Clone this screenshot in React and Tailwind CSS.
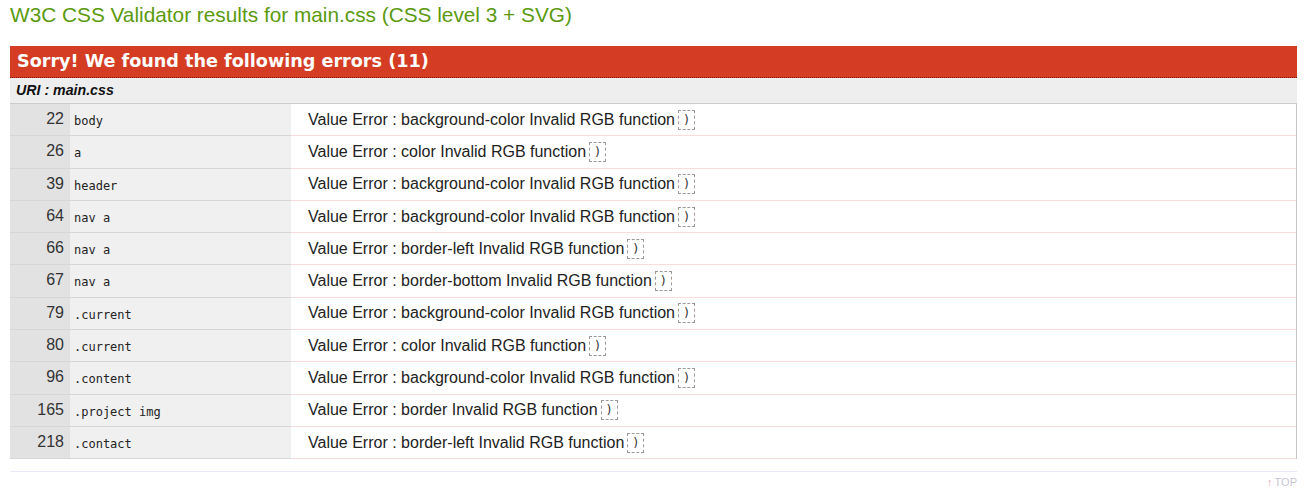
const errors = [
  { line: 22, ctx: 'body', prop: 'background-color' },
  { line: 26, ctx: 'a', prop: 'color' },
  { line: 39, ctx: 'header', prop: 'background-color' },
  { line: 64, ctx: 'nav a', prop: 'background-color' },
  { line: 66, ctx: 'nav a', prop: 'border-left' },
  { line: 67, ctx: 'nav a', prop: 'border-bottom' },
  { line: 79, ctx: '.current', prop: 'background-color' },
  { line: 80, ctx: '.current', prop: 'color' },
  { line: 96, ctx: '.content', prop: 'background-color' },
  { line: 165, ctx: '.project img', prop: 'border' },
  { line: 218, ctx: '.contact', prop: 'border-left' },
];

export default function App() {
  return (
    <div className="w-[1312px] h-[492px] bg-white px-[10px] overflow-hidden font-['Liberation_Sans',Arial,sans-serif]">
      <h2 className="h-[31px] pt-[2px] text-[20.8px] leading-[26px] text-[#5b9a0f]">
        W3C CSS Validator results for main.css (CSS level 3 + SVG)
      </h2>

      <div className="mt-[15px] w-[1287px]">
        {/* Header */}
        <div className="h-[32px] bg-[#d43d23] border-b border-dotted border-[#7a1a0c] pl-[7px] flex items-center">
          <span className="text-white font-bold text-[17.6px] font-['DejaVu_Sans',Verdana,sans-serif]">
            Sorry! We found the following errors (11)
          </span>
        </div>

        {/* URI */}
        <div className="h-[26px] bg-[#eeeeee] border-b border-[#cccccc] pl-[6px] flex items-center">
          <span className="text-[14.2px] font-bold italic text-[#111]">URI : main.css</span>
        </div>

        {/* Rows */}
        <div className="border-r border-[#c8c8c8]">
          {errors.map((e) => (
            <div key={e.line} className="flex h-[32.3px]">
              <div className="w-[60px] bg-[#e2e2e2] border-b border-[#d6d6d6] text-right pr-[6px] text-[16px] leading-[30px] text-[#333]">
                {e.line}
              </div>
              <div className="w-[221px] bg-[#f0f0f0] border-b border-[#d6d6d6] pl-[4px] pt-[2px] text-[12px] leading-[30px] text-[#222] font-['DejaVu_Sans_Mono',monospace]">
                {e.ctx}
              </div>
              <div className="flex-1 bg-white border-b border-[#fadcdc] pl-[17px] flex items-center text-[16px] text-[#222]">
                <span>Value Error : {e.prop} Invalid RGB function</span>
                <span className="ml-[3px] inline-flex items-center justify-center w-[17px] h-[20px] border border-dashed border-[#999] text-[12px] leading-none text-[#333] font-['DejaVu_Sans_Mono',monospace]">
                  )
                </span>
              </div>
            </div>
          ))}
        </div>

        <div className="mt-[12px] border-t border-[#ebe8fb]" />
        <div className="flex justify-end pt-[3px] text-[11px] leading-[14px] text-[#c7c7d3]">
          <span className="text-[#e8a8b8]">↑</span>
          <span className="ml-[2px]">TOP</span>
        </div>
      </div>
    </div>
  );
}
